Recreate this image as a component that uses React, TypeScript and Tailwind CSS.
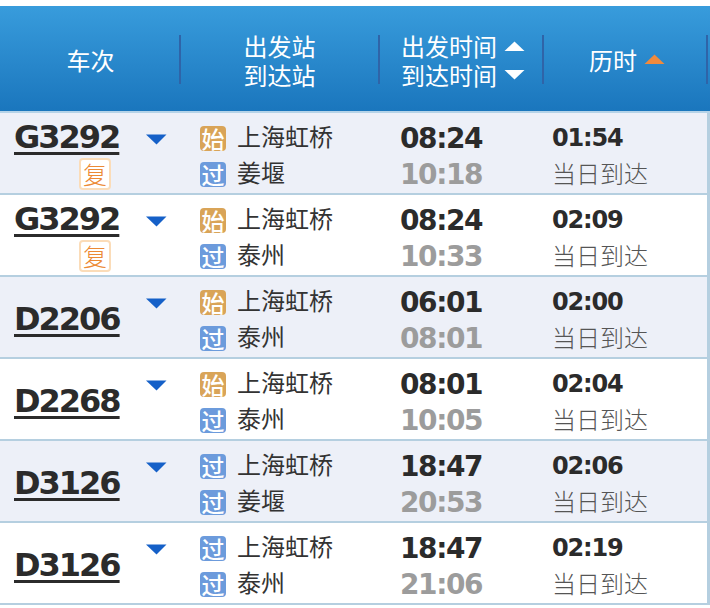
const cjk = "font-['Noto_Sans_CJK_SC','DejaVu_Sans',sans-serif]";

type Row = {
    no: string;
    fu?: boolean;
    start: "始" | "过";
    to: string;
    dep: string;
    arr: string;
    dur: string;
};

const rows: Row[] = [
    { no: "G3292", fu: true, start: "始", to: "姜堰", dep: "08:24", arr: "10:18", dur: "01:54" },
    { no: "G3292", fu: true, start: "始", to: "泰州", dep: "08:24", arr: "10:33", dur: "02:09" },
    { no: "D2206", start: "始", to: "泰州", dep: "06:01", arr: "08:01", dur: "02:00" },
    { no: "D2268", start: "始", to: "泰州", dep: "08:01", arr: "10:05", dur: "02:04" },
    { no: "D3126", start: "过", to: "姜堰", dep: "18:47", arr: "20:53", dur: "02:06" },
    { no: "D3126", start: "过", to: "泰州", dep: "18:47", arr: "21:06", dur: "02:19" },
];

function Tag({ text }: { text: string }) {
    const color = text === "始" ? "bg-[#d9a458]" : "bg-[#6c9bdc]";
    return (
        <span className={`flex h-[25px] w-[26px] items-center justify-center rounded-[4px] text-[23px] font-medium leading-none text-white ${color} ${cjk}`}>
            {text}
        </span>
    );
}

function Divider() {
    return <div className="h-[49px] w-[2px] shrink-0 bg-[#2f64a8]" />;
}

function Arrow({ up, color }: { up?: boolean; color: string }) {
    return (
        <svg width="21" height="11" viewBox="0 0 21 11" className="block">
            <path d={up ? "M10.5 0.5 L20.5 10 L0.5 10 Z" : "M0.5 1 L20.5 1 L10.5 10.5 Z"} fill={color} />
        </svg>
    );
}

function TrainRow({ row, shaded }: { row: Row; shaded: boolean }) {
    return (
        <div className={`flex h-[82px] border-b-2 border-r-[3px] border-[#b5cfe0] ${shaded ? "bg-[#edf0f8]" : "bg-white"}`}>
            <div className="relative w-[181px] shrink-0">
                <a className={`absolute left-[14px] ${row.fu ? "top-[4px]" : "top-[22px]"} font-['DejaVu_Sans',sans-serif] text-[32px] font-bold leading-[40px] tracking-[-2px] text-[#2b2b2b] underline decoration-[3px] underline-offset-[4px]`}>
                    {row.no}
                </a>
                {row.fu && (
                    <span className={`absolute left-[79px] top-[45px] flex h-[32px] w-[32px] items-center justify-center rounded-[4px] border-2 border-[#fbdcb8] bg-white text-[24px] leading-none text-[#ec8a35] ${cjk} font-light`}>
                        复
                    </span>
                )}
                <svg width="21" height="11" viewBox="0 0 21 11" className="absolute left-[146px] top-[21px]">
                    <path d="M0 0.5 L20.5 0.5 L10.5 10.5 Z" fill="#1560c8" />
                </svg>
            </div>
            <div className="w-[201px] shrink-0 pl-[19px] pt-[7px]">
                <div className="flex h-[36px] items-center gap-[11px]">
                    <Tag text={row.start} />
                    <span className={`pb-[5px] text-[24px] leading-none text-[#333] ${cjk}`}>上海虹桥</span>
                </div>
                <div className="flex h-[36px] items-center gap-[11px]">
                    <Tag text="过" />
                    <span className={`pb-[5px] text-[24px] leading-none text-[#333] ${cjk}`}>{row.to}</span>
                </div>
            </div>
            <div className="w-[170px] shrink-0 pl-[18px] pt-[8px] font-['DejaVu_Sans',sans-serif] text-[28px] font-bold leading-[36px] tracking-[-1.4px]">
                <div className="text-[#2b2b2b]">{row.dep}</div>
                <div className="text-[#9c9c9c]">{row.arr}</div>
            </div>
            <div className="flex-1 pt-[7px]">
                <div className="font-['DejaVu_Sans',sans-serif] text-[24px] font-bold leading-[36px] tracking-[-1.2px] text-[#2b2b2b]">{row.dur}</div>
                <div className={`text-[24px] font-light leading-[34px] text-[#555] ${cjk}`}>当日到达</div>
            </div>
        </div>
    );
}

export default function App() {
    return (
        <div className="h-[608px] w-[710px] overflow-hidden bg-white pt-[6px]">
            <div className={`flex h-[107px] items-center border-b-2 border-[#b5d3e8] bg-gradient-to-b from-[#389cdc] to-[#1a76bd] pt-[2px] text-[24px] leading-[29px] text-white ${cjk}`}>
                <div className="w-[179px] shrink-0 pl-[2px] text-center">车次</div>
                <Divider />
                <div className="w-[197px] shrink-0 text-center">
                    <div>出发站</div>
                    <div>到达站</div>
                </div>
                <Divider />
                <div className="flex w-[162px] shrink-0 justify-center gap-[7px] pl-[4px]">
                    <div>
                        <div>出发时间</div>
                        <div>到达时间</div>
                    </div>
                    <div className="flex flex-col justify-center gap-[17px] pt-[1px]">
                        <Arrow up color="#ffffff" />
                        <Arrow color="#ffffff" />
                    </div>
                </div>
                <Divider />
                <div className="flex w-[162px] shrink-0 items-center justify-center gap-[7px] pl-[4px]">
                    <span>历时</span>
                    <Arrow up color="#f08a3c" />
                </div>
                <Divider />
            </div>
            {rows.map((row, i) => (
                <TrainRow key={i} row={row} shaded={i % 2 === 0} />
            ))}
        </div>
    );
}
